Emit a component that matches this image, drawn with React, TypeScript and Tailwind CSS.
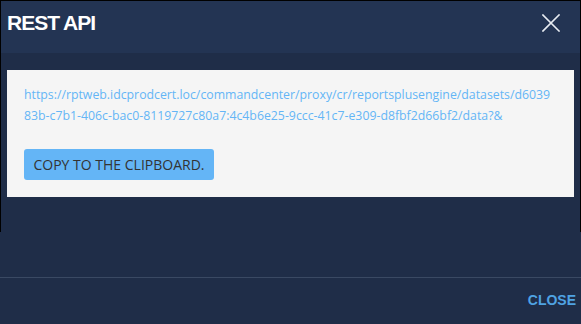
import React from "react";

export default function App() {
  return (
    <div className="w-[581px] h-[324px] bg-[#1f2d48] flex flex-col overflow-hidden">
      <div className="h-[232px] border-x border-t border-black flex flex-col">
        <div className="h-[52px] bg-[#233453] flex items-start justify-between pl-[6px] pr-[20px] pt-[11px]">
          <h1 className="text-white text-[21px] font-bold tracking-[-1px] leading-[21px]" style={{ fontFamily: "'Liberation Sans', Arial, sans-serif" }}>
            REST API
          </h1>
          <svg width="18" height="18" viewBox="0 0 18 18" className="mt-[2px]">
            <path d="M1 1 L17 17 M17 1 L1 17" stroke="#e8ecf2" strokeWidth="1.6" strokeLinecap="square" />
          </svg>
        </div>
        <div className="pt-[17px] px-[6px]">
          <div className="bg-[#f5f5f5] h-[127px] pl-[17px] pr-[6px] pt-[14px]">
            <p className="text-[#64b5f6] text-[12.3px] leading-[21px] whitespace-nowrap" style={{ fontFamily: "'Open Sans', sans-serif" }}>
              https://rptweb.idcprodcert.loc/commandcenter/proxy/cr/reportsplusengine/datasets/d6039
              <br />
              83b-c7b1-406c-bac0-8119727c80a7:4c4b6e25-9ccc-41c7-e309-d8fbf2d66bf2/data?&amp;
            </p>
            <button className="mt-[23px] w-[190px] h-[31px] bg-[#64b5f6] rounded-[3px] text-[#333333] text-[14px] font-normal" style={{ fontFamily: "'Open Sans', sans-serif" }}>
              COPY TO THE CLIPBOARD.
            </button>
          </div>
        </div>
      </div>
      <div className="h-[45px]"></div>
      <div className="h-[1px] bg-[#3a4963]"></div>
      <div className="flex-1 flex items-center justify-end pr-[5px] pb-[2px]">
        <span className="text-[#4fa3e3] text-[14px] font-bold" style={{ fontFamily: "'Liberation Sans', Arial, sans-serif" }}>
          CLOSE
        </span>
      </div>
    </div>
  );
}
